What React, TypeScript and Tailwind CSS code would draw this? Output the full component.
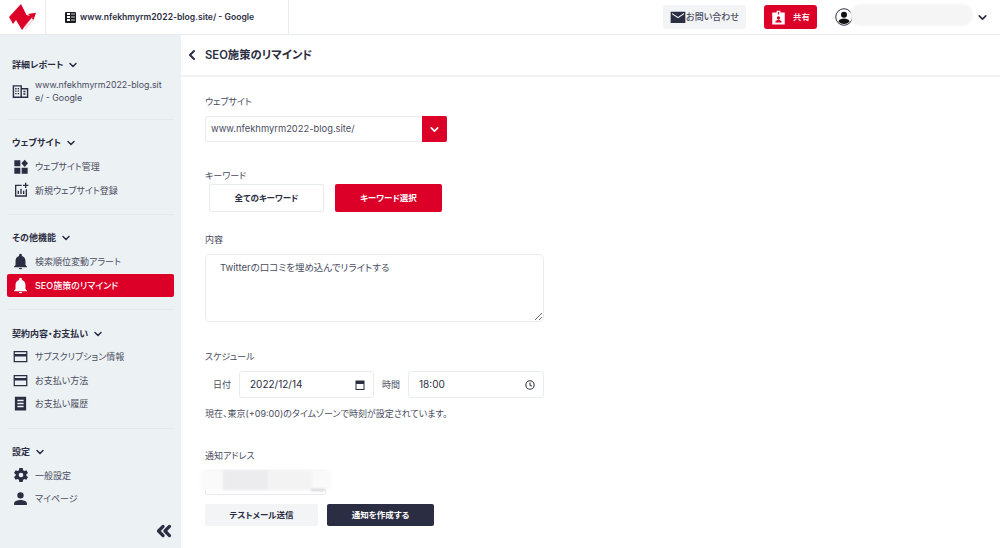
import React from "react";
import { ChevronDown, ChevronLeft, ChevronsLeft } from "lucide-react";

const FONT = "font-['Inter','Noto_Sans_CJK_JP','Noto_Sans',sans-serif] [font-feature-settings:'palt']";

function Ic({ d, size = 16, className = "" }: { d: string; size?: number; className?: string }) {
  return (
    <svg width={size} height={size} viewBox="0 0 24 24" fill="currentColor" className={className}>
      <path d={d} fillRule="evenodd" />
    </svg>
  );
}

const P = {
  building: "M1 3h13v4h9v14H1V3zm2 2v14h9V5H3zm1.500 2h2v2h-2V7zm3.500 0h2v2H8V7zm-3.500 3.500h2v2h-2v-2zm3.500 0h2v2H8v-2zm-3.500 3.500h2v2h-2v-2zm3.500 0h2v2H8v-2zM14 9v10h7V9h-7zm2 2h3v2h-3v-2zm0 3.500h3v2h-3v-2z",
  dash: "M2 2h9v9H2V2zm0 11h9v9H2v-9zm11 0h9v9h-9v-9zM17.500 1l5 5.500-5 5.500-5-5.500 5-5.500z",
  add: "M3 4h10v2H5v14h14v-9h2v11H3V4zm4 9h2v5H7v-5zm4-3h2v8h-2v-8zm4 3h2v5h-2v-5zM18 1h2v3h3v2h-3v3h-2V6h-3V4h3V1z",
  bell: "M12 23a2.500 2.500 0 0 0 2.500-2h-5A2.500 2.500 0 0 0 12 23zm7-6v-6c0-3.300-1.800-6-5-6.800V3a2 2 0 0 0-4 0v1.200C6.800 5 5 7.700 5 11v6l-2 2v1h18v-1l-2-2z",
  card: "M1 3h22v18H1V3zm2 2v3h18V5H3zm0 7v7h18v-7H3z",
  receipt: "M3 1h18v22H3V1zm4 5v2.500h10V6H7zm0 4.800v2.500h10v-2.500H7zm0 4.800v2.500h10v-2.500H7z",
  gear: "M20 13.200a8 8 0 0 0 0-2.400l2.500-1.900-2.400-4.200-3 1.200a8 8 0 0 0-2-1.200L14.600 1.500H9.400L9 4.700a8 8 0 0 0-2 1.200L4 4.700 1.500 8.900 4 10.800a8 8 0 0 0 0 2.400l-2.500 1.900L3.900 19.300l3-1.200a8 8 0 0 0 2 1.200l.5 3.200h5.200l.5-3.200a8 8 0 0 0 2-1.200l3 1.200 2.400-4.200-2.500-1.900zM12 15.500a3.500 3.500 0 1 1 0-7 3.500 3.500 0 0 1 0 7z",
  person: "M12 12a4.500 4.500 0 1 0 0-9 4.500 4.500 0 0 0 0 9zm0 2c-3.500 0-9 1.700-9 4.500V21h18v-2.500c0-2.800-5.500-4.500-9-4.500z",
  mail: "M1 4h22v17H1V4zm11 10 9-6V6l-9 6-9-6v2l9 6z",
  badge: "M2 4h7V1h6v3h7v19H2V4zm9-1v4h2V3h-2zm1 7a2.700 2.700 0 1 0 0 5.400 2.700 2.700 0 0 0 0-5.400zm-5 10h10v-1.500c0-1.700-3.300-2.600-5-2.600s-5 .9-5 2.600V20z",
};

function Divider() {
  return <div className="mx-[7px] h-px bg-[#e4e9ec]" />;
}

function Heading({ label }: { label: string }) {
  return (
    <div className="flex h-[16px] items-center gap-[4px] pl-[12px] text-[9px] font-bold leading-[16px] text-[#2b2d42]">
      <span>{label}</span>
      <ChevronDown size={12} strokeWidth={3} />
    </div>
  );
}

function Item({
  icon,
  label,
  active = false,
  size = 17,
}: {
  icon: string;
  label: string;
  active?: boolean;
  size?: number;
}) {
  return (
    <div
      className={`mx-[7px] flex h-[23.500px] items-center gap-[6px] rounded-[2px] pl-[5px] text-[9px] ${
        active ? "bg-[#dc0029] font-medium text-white" : "text-[#4a4c60]"
      }`}
    >
      <span className={`flex w-[17px] justify-center ${active ? "text-white" : "text-[#2b2d42]"}`}>
        <Ic d={icon} size={size} />
      </span>
      <span>{label}</span>
    </div>
  );
}

function Sidebar() {
  return (
    <aside className="relative flex w-[181px] shrink-0 flex-col bg-[#ecf1f4]">
      <div className="pt-[22px]">
        <Heading label="詳細レポート" />
        <div className="mx-[7px] mt-[6px] flex items-center gap-[6px] pl-[5px] text-[8.800px] leading-[12.500px] text-[#4a4c60]">
          <span className="text-[#2b2d42]">
            <Ic d={P.building} size={17} />
          </span>
          <span className="w-[130px] break-all">www.nfekhmyrm2022-blog.site/ - Google</span>
        </div>
      </div>
      <div className="mt-[15px]">
        <Divider />
      </div>
      <div className="pt-[15px]">
        <Heading label="ウェブサイト" />
      </div>
      <div className="mt-[4px]">
        <Item icon={P.dash} label="ウェブサイト管理" size={16} />
        <Item icon={P.add} label="新規ウェブサイト登録" size={16} />
      </div>
      <div className="mt-[12px]">
        <Divider />
      </div>
      <div className="pt-[15px]">
        <Heading label="その他機能" />
      </div>
      <div className="mt-[4px]">
        <Item icon={P.bell} label="検索順位変動アラート" />
        <Item icon={P.bell} label="SEO施策のリマインド" active />
      </div>
      <div className="mt-[12px]">
        <Divider />
      </div>
      <div className="pt-[16px]">
        <Heading label="契約内容・お支払い" />
      </div>
      <div className="mt-[3px]">
        <Item icon={P.card} label="サブスクリプション情報" size={15} />
        <Item icon={P.card} label="お支払い方法" size={15} />
        <Item icon={P.receipt} label="お支払い履歴" size={15} />
      </div>
      <div className="mt-[12px]">
        <Divider />
      </div>
      <div className="pt-[15px]">
        <Heading label="設定" />
      </div>
      <div className="mt-[4px]">
        <Item icon={P.gear} label="一般設定" size={16} />
        <Item icon={P.person} label="マイページ" />
      </div>
      <div className="mt-[9px] flex justify-end pr-[6px] text-[#2b2d42]">
        <ChevronsLeft size={22} strokeWidth={3.500} />
      </div>
    </aside>
  );
}

function Header() {
  return (
    <header className="flex h-[35px] shrink-0 items-stretch border-b border-[#e9ecef] bg-white">
      <div className="w-[46px] border-r border-[#e9ecef]">
        <svg width="45" height="34" viewBox="0 0 45 34">
          <path d="M9 17 21 4l5.500 11 3.500 1-2-2 8-1.300L33.500 20l-2-2L22 30l-6-10-3 4z" fill="#dc0029" />
          <path d="m23.500 27.500 9-10.500M25 29l9-10.500" stroke="#f08a9c" strokeWidth=".6" fill="none" />
        </svg>
      </div>
      <div className="flex w-[243px] items-center gap-[4px] border-r border-[#e9ecef] pl-[19px] text-[8.600px] font-semibold text-[#2b2d42]">
        <span className="grid h-[11px] w-[11px] grid-cols-2 grid-rows-3 gap-px rounded-[1px] bg-[#1c1c24] p-[1.500px]">
          <span className="bg-white" />
          <span className="bg-[#777]" />
          <span className="bg-white" />
          <span className="bg-[#777]" />
          <span className="bg-white" />
          <span className="bg-[#777]" />
        </span>
        <span>www.nfekhmyrm2022-blog.site/ - Google</span>
      </div>
      <div className="flex flex-1 items-center justify-end">
        <div className="flex h-[24px] w-[83px] items-center justify-center rounded-[3px] bg-[#f2f4f6] text-[9px] font-medium text-[#4a4c60]">
          <Ic d={P.mail} size={16} className="text-[#2b2d42]" />
          <span>お問い合わせ</span>
        </div>
        <div className="ml-[18px] flex h-[24px] w-[53px] items-center justify-center gap-[7px] rounded-[3px] bg-[#dc0029] text-[8.500px] font-medium text-white">
          <Ic d={P.badge} size={15} />
          <span>共有</span>
        </div>
        <div className="relative ml-[18px] flex w-[165px] items-center">
          <svg width="18" height="18" viewBox="0 0 24 24" className="text-[#2b2d42]">
            <circle cx="12" cy="12" r="11" fill="white" stroke="currentColor" strokeWidth="1.300" />
            <circle cx="12" cy="9" r="4" fill="#111" />
            <path d="M4.500 18c1-3 4.500-4 7.500-4s6.500 1 7.500 4a10 10 0 0 1-15 0z" fill="#111" />
          </svg>
          <div className="absolute left-[15px] top-[-4px] h-[22px] w-[123px] rounded-full bg-[#f5f5f6] blur-[1px]" />
          <ChevronDown size={13} strokeWidth={3} className="absolute right-[11px] text-[#2b2d42]" />
        </div>
      </div>
    </header>
  );
}

function Label({ children }: { children: React.ReactNode }) {
  return <div className="-mb-px pt-px text-[9px] leading-[12px] text-[#4a4c60]">{children}</div>;
}

function Main() {
  return (
    <main className="flex min-w-0 flex-1 flex-col bg-white">
      <div className="flex h-[42px] shrink-0 items-center gap-[5px] border-b-2 border-[#f1f3f5] pl-[3px] text-[#2b2d42]">
        <ChevronLeft size={16} strokeWidth={3} />
        <span className="text-[11.300px] font-semibold">SEO施策のリマインド</span>
      </div>
      <div className="pl-[24px] pt-[18px]">
        <Label>ウェブサイト</Label>
        <div className="mt-[9px] flex h-[26px] w-[242px] items-center justify-between rounded-[2px] border border-[#e9ecef]">
          <span className="pl-[5px] text-[9.400px] text-[#4a4c60]">www.nfekhmyrm2022-blog.site/</span>
          <span className="-mr-px flex h-[26px] w-[25px] items-center justify-center rounded-r-[2px] bg-[#dc0029] text-white">
            <ChevronDown size={13} strokeWidth={3} />
          </span>
        </div>

        <div className="mt-[27px]">
          <Label>キーワード</Label>
        </div>
        <div className="mt-[3px] flex gap-[10px] pl-[4px]">
          <div className="flex h-[28px] w-[115px] items-center justify-center rounded-[2px] border border-[#e9ecef] text-[8.500px] font-bold text-[#2b2d42]">
            全てのキーワード
          </div>
          <div className="ml-px flex h-[28px] w-[107px] items-center justify-center rounded-[2px] bg-[#dc0029] text-[8.500px] font-bold text-white">
            キーワード選択
          </div>
        </div>

        <div className="mt-[21px]">
          <Label>内容</Label>
        </div>
        <textarea
          readOnly
          value="Twitterの口コミを埋め込んでリライトする"
          className={`mt-[9px] block h-[68px] w-[339px] rounded-[5px] border border-[#e9ecef] px-[14px] py-[6px] text-[9.500px] text-[#4a4c60] outline-none ${FONT}`}
        />

        <div className="mt-[28px]">
          <Label>スケジュール</Label>
        </div>
        <div className="mt-[9px] flex h-[27px] w-[339px] items-stretch text-[#4a4c60]">
          <span className="flex w-[34px] items-center justify-center text-[9px]">日付</span>
          <div className="flex w-[135px] items-center justify-between rounded-[3px] border border-[#e9ecef] pl-[10px] pr-[7px] text-[10px] text-[#2b2d42]">
            <span>2022/12/14</span>
            <svg width="12" height="12" viewBox="0 0 24 24" fill="currentColor">
              <path d="M3 3h18v19H3V3zm2 7v10h14V10H5z" fillRule="evenodd" />
            </svg>
          </div>
          <span className="flex w-[34px] items-center justify-center text-[9px]">時間</span>
          <div className="flex flex-1 items-center justify-between rounded-[3px] border border-[#e9ecef] pl-[10px] pr-[8px] text-[10px] text-[#2b2d42]">
            <span>18:00</span>
            <svg width="10" height="10" viewBox="0 0 24 24" fill="none" stroke="currentColor" strokeWidth="2.500">
              <circle cx="12" cy="12" r="10" />
              <path d="M12 6v6l4 3" />
            </svg>
          </div>
        </div>
        <div className="mt-[10px] text-[9px] leading-[12px] text-[#4a4c60]">
          現在、東京(+09:00)のタイムゾーンで時刻が設定されています。
        </div>

        <div className="mt-[29px]">
          <Label>通知アドレス</Label>
        </div>
        <div className="relative mt-[9px] h-[25px] w-[121px] rounded-[2px] border border-[#e9ecef]">
          <div className="absolute -left-[6px] -top-px h-[20px] w-[131px] rounded-sm bg-[#fafafa] blur-[1px]" />
          <div className="absolute left-[62px] -top-px h-[20px] w-[44px] bg-[#f3f3f4] blur-[1px]" />
          <div className="absolute left-[17px] -top-px h-[20px] w-[45px] bg-[#ececee] blur-[1px]" />
          <div className="absolute right-0 top-[18px] h-[2px] w-[14px] bg-[#cfcfd3] blur-[1px]" />
        </div>
        <div className="mt-[9px] flex gap-[9px]">
          <div className="flex h-[22px] w-[113px] items-center justify-center rounded-[2px] bg-[#f2f4f6] text-[8.500px] font-bold text-[#2b2d42]">
            テストメール送信
          </div>
          <div className="flex h-[22px] w-[107px] items-center justify-center rounded-[2px] bg-[#2b2d42] text-[8.500px] font-bold text-white">
            通知を作成する
          </div>
        </div>
      </div>
    </main>
  );
}

export default function App() {
  return (
    <div className={`flex h-[548px] w-[1000px] flex-col overflow-hidden bg-white ${FONT}`}>
      <Header />
      <div className="flex min-h-0 flex-1">
        <Sidebar />
        <Main />
      </div>
    </div>
  );
}
